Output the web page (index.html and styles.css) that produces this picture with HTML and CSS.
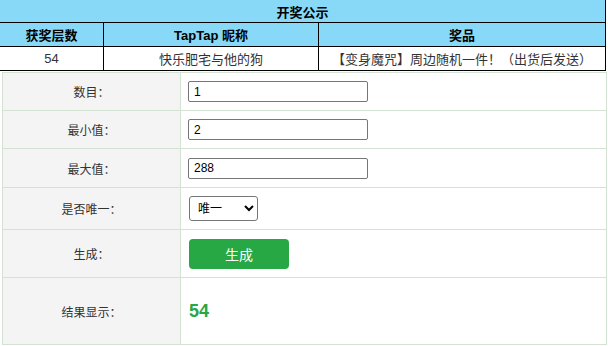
FILE: index.html
```html
<!DOCTYPE html>
<html lang="zh-CN">
<head>
<meta charset="utf-8">
<title>开奖公示</title>
<link rel="stylesheet" href="styles.css">
</head>
<body>
<div class="award">
  <div class="award-title">开奖公示</div>
  <div class="award-head">获奖层数</div>
  <div class="award-head">TapTap 昵称</div>
  <div class="award-head">奖品</div>
  <div class="award-cell">54</div>
  <div class="award-cell">快乐肥宅与他的狗</div>
  <div class="award-cell">【变身魔咒】周边随机一件！（出货后发送）</div>
</div>
<div class="form">
  <div class="label">数目：</div>
  <div class="value"><input class="field" type="text" value="1"></div>
  <div class="label">最小值：</div>
  <div class="value"><input class="field" type="text" value="2"></div>
  <div class="label">最大值：</div>
  <div class="value"><input class="field" type="text" value="288"></div>
  <div class="label">是否唯一：</div>
  <div class="value"><select class="choice"><option>唯一</option><option>不唯一</option></select></div>
  <div class="label">生成：</div>
  <div class="value"><button class="gen" type="button">生成</button></div>
  <div class="label">结果显示：</div>
  <div class="value"><span class="result">54</span></div>
</div>
</body>
</html>
```

FILE: styles.css
```css
html, body {
  margin: 0;
  padding: 0;
  background: #fff;
}
body {
  font-family: "Liberation Sans", "Noto Sans CJK SC", sans-serif;
  color: #333;
  text-spacing-trim: space-all;
}
.award {
  box-sizing: border-box;
  width: 607px;
  margin: -1px 0 0 -1px;
  border: 1px solid #000;
  background: #000;
  display: grid;
  grid-template-columns: 103px 214px 286px;
  grid-template-rows: 22px 23px 23px;
  gap: 1px;
  font-size: 13px;
}
.award-title,
.award-head {
  background: #88d8f7;
  color: #000;
  font-weight: bold;
  display: flex;
  align-items: center;
  justify-content: center;
}
.award-title {
  grid-column: 1 / 4;
}
.award-cell {
  background: #fff;
  color: #333;
  display: flex;
  align-items: center;
  justify-content: center;
}
.form {
  box-sizing: border-box;
  width: 605px;
  margin: 1px 0 0 2px;
  border: 1px solid #d3e2d3;
  background: #d3e2d3;
  display: grid;
  grid-template-columns: 177px 1fr;
  grid-template-rows: 37px 37px 38px 41px 47px 66px;
  gap: 1px;
}
.label {
  background: #f4f4f4;
  font-size: 12px;
  color: #333;
  display: flex;
  align-items: center;
  justify-content: center;
}
.value {
  background: #fff;
  display: flex;
  align-items: center;
  padding-left: 7px;
}
.field {
  box-sizing: border-box;
  width: 180px;
  height: 21px;
  margin: 0;
  padding: 0 5px;
  border: 1px solid #767676;
  border-radius: 2px;
  font-family: "Liberation Sans", "Noto Sans CJK SC", sans-serif;
  font-size: 12px;
  color: #000;
}
.choice {
  box-sizing: border-box;
  width: 69px;
  height: 25px;
  margin: 0 0 0 1px;
  padding: 0 4px;
  border: 1px solid #767676;
  border-radius: 3px;
  background: #fff;
  font-family: "Liberation Sans", "Noto Sans CJK SC", sans-serif;
  font-size: 12px;
  color: #000;
}
.gen {
  box-sizing: border-box;
  width: 100px;
  height: 30px;
  margin: 0 0 0 1px;
  padding: 0;
  border: none;
  border-radius: 4px;
  background: #28a745;
  color: #fff;
  font-family: "Liberation Sans", "Noto Sans CJK SC", sans-serif;
  font-size: 14px;
}
.result {
  color: #28a745;
  font-weight: bold;
  font-size: 18px;
  margin-left: 1px;
}
```
